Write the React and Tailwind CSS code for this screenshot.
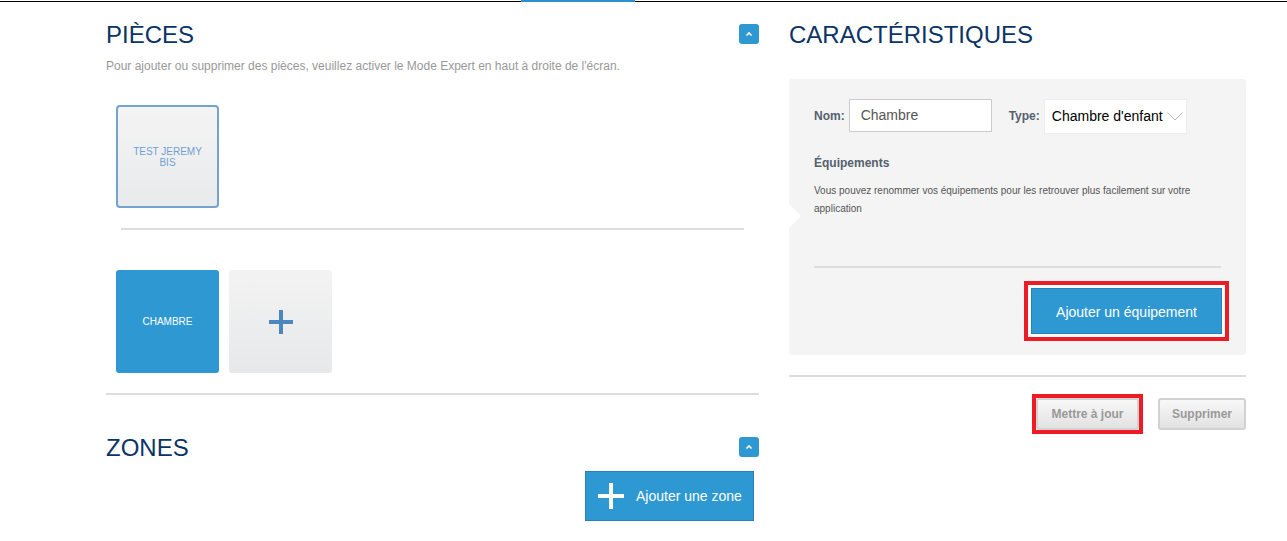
import React from "react";

const FONT = { fontFamily: '"Liberation Sans", Arial, sans-serif' };

function Caret() {
  return (
    <button className="flex h-[20px] w-[20px] items-center justify-center rounded-[3px] bg-[#2e98d3]">
      <svg width="8" height="6" viewBox="0 0 8 6">
        <polyline points="1.5,4.5 4,2 6.5,4.5" fill="none" stroke="white" strokeWidth="1.6" />
      </svg>
    </button>
  );
}

export default function App() {
  return (
    <div className="min-h-[541px] w-[1287px] bg-white" style={FONT}>
      <div className="flex h-[2px]">
        <div className="w-[521px] border-b border-black" />
        <div className="w-[114px] bg-[#2e8fd0]" />
        <div className="flex-1 border-b border-black" />
      </div>
      <div className="flex">
        {/* Left column */}
        <div className="ml-[106px] w-[653px]">
          <div className="mt-[18px] flex h-[28px] items-center justify-between">
            <h1 className="pt-[2px] text-[24px] leading-[28px] text-[#0b3466]">PIÈCES</h1>
            <Caret />
          </div>
          <p className="mt-[10px] text-[12px] leading-[16px] text-[#999]">
            Pour ajouter ou supprimer des pièces, veuillez activer le Mode Expert en haut à droite de l'écran.
          </p>
          <div className="ml-[10px] mt-[31px] flex">
            <div className="flex h-[103px] w-[103px] items-center justify-center rounded-[4px] border-2 border-[#74a3cf] bg-gradient-to-b from-[#f4f4f4] to-[#e9eaec] px-2 text-center text-[10px] leading-[11px] text-[#6e9fd4]">
              TEST JEREMY
              <br />
              BIS
            </div>
          </div>
          <div className="ml-[15px] mt-[20px] h-[2px] w-[623px] bg-[#ddd]" />
          <div className="ml-[10px] mt-[40px] flex gap-[10px]">
            <div className="flex h-[103px] w-[103px] items-center justify-center rounded-[3px] bg-[#2e98d3] text-[10px] text-white">
              CHAMBRE
            </div>
            <div className="flex h-[103px] w-[103px] items-center justify-center rounded-[3px] bg-gradient-to-b from-[#f3f3f3] to-[#e7e8ea]">
              <svg width="24" height="24" viewBox="0 0 24 24">
                <rect x="10" y="0" width="4" height="24" fill="#4b86bd" />
                <rect x="0" y="10" width="24" height="4" fill="#4b86bd" />
              </svg>
            </div>
          </div>
          <div className="mt-[20px] h-[2px] w-full bg-[#ddd]" />
          <div className="mt-[38px] flex h-[28px] items-center justify-between">
            <h1 className="pt-[2px] text-[24px] leading-[28px] text-[#0b3466]">ZONES</h1>
            <Caret />
          </div>
          <div className="mr-[5px] mt-[10px] flex justify-end">
            <button className="flex h-[50px] w-[169px] items-center gap-[12px] border border-[#2a80b9] bg-[#2e98d3] pl-[12px] text-[14px] text-white">
              <svg width="26" height="26" viewBox="0 0 26 26">
                <rect x="11" y="0" width="4" height="26" fill="white" />
                <rect x="0" y="11" width="26" height="4" fill="white" />
              </svg>
              Ajouter une zone
            </button>
          </div>
        </div>

        {/* Right column */}
        <div className="ml-[30px] w-[457px]">
          <div className="mt-[18px] flex h-[28px] items-center">
            <h1 className="pt-[2px] text-[24px] leading-[28px] text-[#0b3466]">CARACTÉRISTIQUES</h1>
          </div>
          <div className="relative mt-[31px] rounded-[3px] bg-[#f4f4f4] px-[25px] pb-[14px] pt-[20px]">
            <div className="absolute left-0 top-[125px] h-0 w-0 border-y-[12px] border-l-[12px] border-y-transparent border-l-white" />
            <div className="flex h-[35px] items-center">
              <span className="mb-[2px] text-[12px] font-bold text-[#555f6e]">Nom:</span>
              <div className="mb-[2px] ml-[4px] flex h-[33px] w-[143px] items-center border border-[#ccc] bg-white pl-[11px] text-[14px] text-[#555]">
                Chambre
              </div>
              <span className="mb-[2px] ml-[17px] text-[12px] font-bold text-[#555f6e]">Type:</span>
              <div className="ml-[4px] flex h-[35px] w-[143px] items-center justify-between border border-[#eee] bg-white pl-[7px] pr-[3px] text-[14px] text-black">
                <span>Chambre d'enfant</span>
                <svg width="16" height="9" viewBox="0 0 16 9">
                  <polyline points="0.5,0.5 8,8 15.5,0.5" fill="none" stroke="#b5b5b5" strokeWidth="1" />
                </svg>
              </div>
            </div>
            <div className="mt-[21px] text-[12px] font-bold leading-[16px] text-[#555f6e]">Équipements</div>
            <p className="mt-[11px] text-[10px] leading-[18px] text-[#555]">
              Vous pouvez renommer vos équipements pour les retrouver plus facilement sur votre application
            </p>
            <div className="mt-[48px] h-[2px] w-full bg-[#ddd]" />
            <div className="mr-[-8px] mt-[13px] flex justify-end">
              <div className="border-4 border-[#ed1c24] bg-white p-[3px]">
                <button className="flex h-[46px] w-[191px] items-center justify-center border border-[#2a80b9] bg-[#2e98d3] pt-[2px] text-[14px] text-white">
                  Ajouter un équipement
                </button>
              </div>
            </div>
          </div>
          <div className="mt-[20px] h-[2px] w-full bg-[#ddd]" />
          <div className="mt-[17px] flex items-center justify-end gap-[15px]">
            <div className="border-4 border-[#ed1c24]">
              <button className="flex h-[32px] w-[103px] items-center justify-center rounded-[3px] border-2 border-[#d2d2d2] bg-gradient-to-b from-[#f8f8f8] to-[#e2e2e2] text-[12px] font-bold text-[#999]">
                Mettre à jour
              </button>
            </div>
            <button className="flex h-[32px] w-[88px] items-center justify-center rounded-[3px] border-2 border-[#d2d2d2] bg-gradient-to-b from-[#f8f8f8] to-[#e2e2e2] text-[12px] font-bold text-[#999]">
              Supprimer
            </button>
          </div>
        </div>
      </div>
    </div>
  );
}
